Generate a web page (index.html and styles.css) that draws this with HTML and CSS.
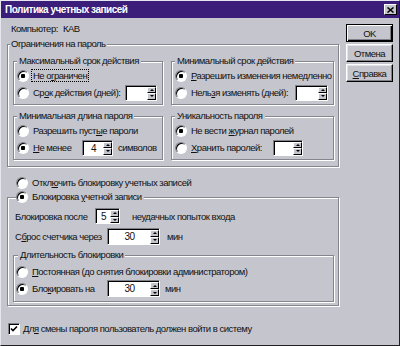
FILE: index.html
```html
<!DOCTYPE html>
<html lang="ru">
<head>
    <meta charset="UTF-8">
    <title>Политика учетных записей</title>
    <link rel="stylesheet" href="styles.css">
</head>
<body>

    <div class="window">
        <div class="titlebar">
            <span class="title">Политика учетных записей</span>
            <span class="close">
                <svg width="7" height="6" viewBox="0 0 7 6"><path d="M0.5 0.5L6.5 5.5M6.5 0.5L0.5 5.5" stroke="#000" stroke-width="1.5"/></svg>
            </span>
        </div>

        <div class="content">
            <div class="main">
                <div class="computer"><span class="computer-label">Компьютер:</span><span>КАВ</span></div>

                <fieldset class="group outer">
                    <legend>Ограничения на пароль</legend>
                    <div class="grid">
                        <fieldset class="group inner">
                            <legend>Максимальный срок действия</legend>
                            <div class="row"><span class="radio on"></span><span class="focus">Не о<u>г</u>раничен</span></div>
                            <div class="row"><span class="radio"></span><span>Ср<u>о</u>к действия (дней):</span><span class="spin w32 push"><span class="val"></span><span class="arrows"><span class="arr up"></span><span class="arr down"></span></span></span></div>
                        </fieldset>
                        <fieldset class="group inner">
                            <legend>Минимальный срок действия</legend>
                            <div class="row"><span class="radio on"></span><span><u>Р</u>азрешить изменения немедленно</span></div>
                            <div class="row"><span class="radio"></span><span>Нель<u>з</u>я изменять (дней):</span><span class="spin w33 push"><span class="val"></span><span class="arrows"><span class="arr up"></span><span class="arr down"></span></span></span></div>
                        </fieldset>
                        <fieldset class="group inner">
                            <legend>Минимальная длина пароля</legend>
                            <div class="row"><span class="radio"></span><span>Разрешить пуст<u>ы</u>е пароли</span></div>
                            <div class="row"><span class="radio on"></span><span class="lbl-min"><u>Н</u>е менее</span><span class="spin w31"><span class="val">4</span><span class="arrows"><span class="arr up"></span><span class="arr down"></span></span></span><span class="after">символов</span></div>
                        </fieldset>
                        <fieldset class="group inner">
                            <legend>Уникальность пароля</legend>
                            <div class="row"><span class="radio on"></span><span>Не вести <u>ж</u>урнал паролей</span></div>
                            <div class="row"><span class="radio"></span><span class="lbl-keep"><u>Х</u>ранить паролей:</span><span class="spin w30"><span class="val"></span><span class="arrows"><span class="arr up"></span><span class="arr down"></span></span></span></div>
                        </fieldset>
                    </div>
                </fieldset>

                <div class="row disable-row"><span class="radio"></span><span>Откл<u>ю</u>чить блокировку учетных записей</span></div>

                <fieldset class="group lock">
                    <legend><span class="radio on"></span><span>Блокировка <u>у</u>четной записи</span></legend>
                    <div class="lock-rows">
                        <div class="row tall"><span class="lbl-after">Блокировка после</span><span class="spin w25"><span class="val">5</span><span class="arrows"><span class="arr up"></span><span class="arr down"></span></span></span><span class="after wide">неу<u>д</u>ачных попыток входа</span></div>
                        <div class="row tall"><span class="lbl-reset">С<u>б</u>рос счетчика через</span><span class="spin w53"><span class="val">30</span><span class="arrows"><span class="arr up"></span><span class="arr down"></span></span></span><span class="after min">мин</span></div>
                    </div>
                    <fieldset class="group duration">
                        <legend>Длительность блокировки</legend>
                        <div class="row"><span class="radio"></span><span><u>П</u>остоянная (до снятия блокировки администратором)</span></div>
                        <div class="row"><span class="radio on"></span><span class="lbl-for">Бло<u>к</u>ировать на</span><span class="spin w53"><span class="val">30</span><span class="arrows"><span class="arr up"></span><span class="arr down"></span></span></span><span class="after">мин</span></div>
                    </fieldset>
                </fieldset>

                <div class="row check-row"><span class="check"><svg width="8" height="8" viewBox="0 0 8 8"><path d="M1 3.5L3 5.5L7 1.5" fill="none" stroke="#000" stroke-width="1.6"/></svg></span><span>Дл<u>я</u> смены пароля пользователь должен войти в систему</span></div>
            </div>

            <div class="buttons">
                <div class="btn default">OK</div>
                <div class="btn">Отмена</div>
                <div class="btn"><u>С</u>правка</div>
            </div>
        </div>
    </div>

</body>
</html>
```

FILE: styles.css
```css
body {
    margin: 0;
    background: #c5c5cd;
    font-family: "Liberation Sans", Arial, sans-serif;
    font-size: 9.5px;
    letter-spacing: -0.5px;
    color: #111;
}

.window {
    width: 400px;
    height: 346px;
    box-sizing: border-box;
    overflow: hidden;
    background: #c5c5cd;
    border: 1px solid;
    border-color: #e6e6ee #202020 #202020 #e6e6ee;
    display: flex;
    flex-direction: column;
}

.titlebar {
    height: 17px;
    flex: none;
    background: #3b1d7a;
    display: flex;
    align-items: center;
    justify-content: space-between;
    padding: 0 2px 0 4px;
}

.title {
    color: #fff;
    font-weight: bold;
    font-size: 10px;
    letter-spacing: -0.5px;
}

.close {
    width: 13px;
    height: 11px;
    box-sizing: border-box;
    background: #c5c5cd;
    border: 1px solid;
    border-color: #fff #000 #000 #fff;
    display: flex;
    align-items: center;
    justify-content: center;
}

.content {
    flex: 1;
    display: flex;
    gap: 7px;
    padding: 5px 5px 0 6px;
}

.main {
    width: 332px;
    flex: none;
    display: flex;
    flex-direction: column;
}

.buttons {
    width: 47px;
    flex: none;
    display: flex;
    flex-direction: column;
    gap: 2px;
    padding-top: 1px;
}

.btn {
    height: 18px;
    box-sizing: border-box;
    display: flex;
    align-items: center;
    justify-content: center;
    border: 1px solid;
    border-color: #fff #000 #000 #fff;
    box-shadow: inset -1px -1px #808088, inset 1px 1px #e2e2ea;
}

.btn.default {
    border-color: #000;
    box-shadow: inset 1px 1px #fff, inset -1px -1px #000, inset -2px -2px #808088;
}

.computer {
    line-height: 12px;
    margin-left: 4px;
    display: flex;
}

.computer-label {
    width: 52px;
}

/* group boxes */
.group {
    margin: 0;
    min-width: 0;
    border: 1px solid #85858d;
    box-shadow: inset 1px 1px #fff, 1px 1px #fff;
}

.group legend {
    line-height: 12px;
    padding: 0 2px;
    white-space: nowrap;
    background: #c5c5cd;
}

.outer {
    margin-top: 3px;
    padding: 5px 4px 6px 5px;
}

.outer > legend {
    margin-left: -3px;
    padding: 0 1px;
}

.grid {
    display: grid;
    grid-template-columns: 150px 163px;
    column-gap: 8px;
    row-gap: 5px;
}

.inner {
    padding: 0 5px 3px 3px;
}

.row {
    display: flex;
    align-items: center;
    height: 17px;
    white-space: nowrap;
}

.radio {
    width: 12px;
    height: 12px;
    flex: none;
    box-sizing: border-box;
    border-radius: 50%;
    background: #fff;
    border: 1px solid;
    border-color: #808088 #fff #fff #808088;
    box-shadow: inset 1px 1px #000;
    margin-right: 4px;
}

.radio.on {
    background: radial-gradient(circle, #000 0 2px, #fff 2.5px);
}

.focus {
    outline: 1px dotted #000;
    padding: 0 1px;
    margin-left: -1px;
}

.push {
    margin-left: auto;
}

.spin {
    display: flex;
    flex: none;
    height: 16px;
    box-sizing: border-box;
    background: #fff;
    border: 1px solid;
    border-color: #808088 #fff #fff #808088;
    box-shadow: inset 1px 1px #000;
    padding: 1px 0 0 1px;
    font-size: 10px;
}

.spin .val {
    flex: 1;
    text-align: center;
    line-height: 13px;
}

.arrows {
    width: 9px;
    display: flex;
    flex-direction: column;
}

.arr {
    flex: 1;
    box-sizing: border-box;
    background: #c5c5cd;
    border: 1px solid;
    border-color: #fff #000 #000 #fff;
    display: flex;
    align-items: center;
    justify-content: center;
}

.arr::before {
    content: "";
    border-left: 2px solid transparent;
    border-right: 2px solid transparent;
}

.arr.up::before {
    border-bottom: 2px solid #000;
}

.arr.down::before {
    border-top: 2px solid #000;
}

.w25 { width: 25px; }
.w30 { width: 30px; }
.w31 { width: 31px; }
.w32 { width: 32px; }
.w33 { width: 33px; }
.w53 { width: 53px; height: 17px; }

.lbl-min { width: 49px; }
.lbl-keep { width: 82px; }
.lbl-after { width: 80px; }
.lbl-reset { width: 92px; }
.lbl-for { width: 75px; }

.after {
    margin-left: 5px;
}

.after.wide {
    margin-left: 12px;
}

.after.min {
    margin-left: 7px;
}

/* lockout */
.disable-row {
    margin: 7px 0 0 9px;
}

.lock {
    padding: 4px 4px 3px 7px;
}

.lock > legend {
    display: flex;
    align-items: center;
    margin-left: 1px;
    padding: 0 2px 0 0;
}

.lock-rows {
    display: flex;
    flex-direction: column;
    gap: 2px;
}

.row.tall {
    height: 18px;
}

.duration {
    margin: 4px 0 0 -2px;
    padding: 2px 4px 4px 2px;
}

.duration > legend {
    margin-left: 2px;
}

.check-row {
    margin: 14px 0 0 1px;
}

.check {
    width: 12px;
    height: 12px;
    flex: none;
    box-sizing: border-box;
    background: #fff;
    border: 1px solid;
    border-color: #808088 #fff #fff #808088;
    box-shadow: inset 1px 1px #000;
    display: flex;
    align-items: center;
    justify-content: center;
    margin-right: 3px;
}
```
